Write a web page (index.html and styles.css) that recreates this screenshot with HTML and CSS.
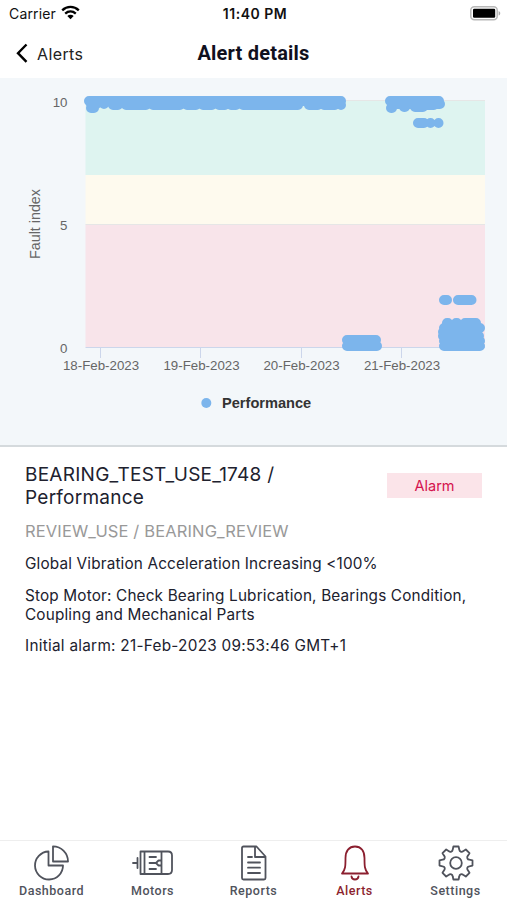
FILE: index.html
```html
<!DOCTYPE html>
<html lang="en">
<head>
<meta charset="utf-8">
<title>Alert details</title>
<link rel="stylesheet" href="styles.css">
</head>
<body>
<div class="screen">
  <div class="status">
    <div class="carrier"><span>Carrier</span>
      <svg width="19" height="15" viewBox="0 0 19 15" fill="none" stroke="#000" stroke-width="2.3"><path d="M1.2 5.4C6 .8 13 .8 17.8 5.4M4.2 8.6C7.3 5.8 11.7 5.8 14.8 8.6"/><path d="M9.5 14.2 6.3 11C8.2 9.3 10.8 9.3 12.7 11Z" fill="#000" stroke="none"/></svg>
    </div>
    <div class="clock">11:40 PM</div>
    <svg class="battery" width="31" height="15" viewBox="0 0 31 15"><rect x=".8" y=".8" width="26.4" height="13" rx="3.5" fill="#fff" stroke="#b8b8b8" stroke-width="1.5"/><rect x="3" y="2.8" width="22.2" height="9" rx="1.2"/><path d="M28.6 5C30.8 5.8 30.8 8.8 28.6 9.6Z" fill="#aaa"/></svg>
  </div>
  <header class="nav">
    <a class="back"><svg width="14" height="22" viewBox="0 0 14 22" fill="none" stroke="#000" stroke-width="2.4"><path d="M12.500 2.500 4 11.200l8.500 8.700"/></svg><span>Alerts</span></a>
    <h1>Alert details</h1>
  </header>
  <section class="chart">
    <svg width="507" height="367" viewBox="0 78 507 367">
      <path fill="#def4f0" d="M85.500 100H485v75H85.500z"/>
      <path fill="#fefaee" d="M85.500 175H485v49.500H85.500z"/>
      <path fill="#f8e4ea" d="M85.500 224.500H485V347H85.500z"/>
      <path stroke="#e6e6e6" d="M85.500 100.500H485M85.500 224.500H485"/>
      <path fill="none" stroke="#ccd6eb" d="M85.500 347.500H485M100.500 347v11M200.500 347v11M301.500 347v11M401.500 347v11"/>
      <g class="series">
        <path d="M89 101H341M91 104.500H96M91 108H94M104 104H104M113 105H118M126 105H146M153 105H180M187 105H196M203 105H212M219 105H225M231 105H236M243 105H298M309 105H318M324 105H335M341 105H341"/>
        <path d="M390 101H439M391 108H392M392 104H440M404 107H405M415 107H423M425 105H434M418 123H424M430.500 123H430.500M438.500 123H438.500M347 340H376M347 346H377M444 300H447M458 300H471.500"/>
        <path d="M447 323H448M456 323H457M465 323H476M444 328H480M443 336H479M443 332H476M444 346H480M444 341H480"/>
      </g>
      <g class="axis">
        <text x="67.500" y="107" text-anchor="end">10</text><text x="67.500" y="229.500" text-anchor="end">5</text><text x="67.500" y="353" text-anchor="end">0</text>
        <text x="101" y="370" text-anchor="middle">18-Feb-2023</text><text x="201.500" y="370" text-anchor="middle">19-Feb-2023</text><text x="301.500" y="370" text-anchor="middle">20-Feb-2023</text><text x="402" y="370" text-anchor="middle">21-Feb-2023</text>
        <text class="ytitle" transform="translate(39.500 224) rotate(-90)" text-anchor="middle">Fault index</text>
      </g>
      <circle cx="206.300" cy="403" r="5" fill="#7cb5ec"/>
      <text class="legend" x="222" y="408">Performance</text>
    </svg>
  </section>
  <main class="details">
    <div class="heading"><h2>BEARING_TEST_USE_1748 /<br>Performance</h2><span class="badge">Alarm</span></div>
    <p class="site">REVIEW_USE / BEARING_REVIEW</p>
    <p class="cause">Global Vibration Acceleration Increasing &lt;100%</p>
    <p class="advice">Stop Motor: Check Bearing Lubrication, Bearings Condition,<br>Coupling and Mechanical Parts</p>
    <p class="initial">Initial alarm: 21-Feb-2023 09:53:46 GMT+1</p>
  </main>
  <nav class="tabs">
    <a><svg width="42" height="36" viewBox="0 0 42 36"><path d="M17.500 6.500A14 14 0 1 0 32 20.500H17.500zM22 1.300V16.500H37A15 15 0 0 0 22 1.300z"/></svg><span>Dashboard</span></a>
    <a><svg width="42" height="36" viewBox="0 0 42 36"><path d="M8.500 6.500H36q4 0 4 4V25q0 4-4 4H8.500zM12.500 6.500v22.500M29.500 6.500v22.500M1 18H5.500M5.500 13V23M17.500 12H24M17.500 18H24M17.500 24H24M29.500 15.500H26.500L24 18l2.500 2.500H29.500"/></svg><span>Motors</span></a>
    <a><svg width="42" height="36" viewBox="0 0 42 36"><path d="M10.500 1.500H23.500L32.500 11.500V33q0 1.500-1.500 1.500H10.500q-1.500 0-1.500-1.500V3q0-1.500 1.500-1.500zM22 1.500V12H32.500M15 12h4M15 17.500H27M15 22.700H27M15 28H27"/></svg><span>Reports</span></a>
    <a class="active"><svg width="42" height="36" viewBox="0 0 42 36"><path d="M8 28.500C11.500 24.500 11.500 21 11.500 13C11.500 6 15 1.500 21 1.500S30.500 6 30.500 13C30.500 21 30.500 24.500 34 28.500ZM17.500 31.500Q18 34.500 21 34.500T24.500 31.500"/></svg><span>Alerts</span></a>
    <a><svg width="42" height="36" viewBox="-21 -18 42 36"><circle r="5.800"/><path d="M-2.600-16.500H2.600L3.300-13.300A2.300 2.300 0 0 0 7.070-11.740L9.830-13.500 13.500-9.830 11.740-7.070A2.300 2.300 0 0 0 13.300-3.300L16.500-2.600V2.600L13.300 3.300A2.300 2.300 0 0 0 11.740 7.070L13.500 9.830 9.830 13.500 7.070 11.740A2.300 2.300 0 0 0 3.300 13.300L2.600 16.500H-2.600L-3.300 13.300A2.300 2.300 0 0 0-7.070 11.740L-9.830 13.500-13.500 9.830-11.740 7.070A2.300 2.300 0 0 0-13.300 3.300L-16.500 2.600V-2.600L-13.300-3.300A2.300 2.300 0 0 0-11.740-7.070L-13.500-9.830-9.830-13.500-7.070-11.740A2.300 2.300 0 0 0-3.300-13.300Z"/></svg><span>Settings</span></a>
  </nav>
</div>
</body>
</html>
```
FILE: styles.css
```css
* { box-sizing: border-box; }
body { margin: 0; background: #fff; color: #20212e; font-family: Inter, sans-serif; }
.screen { width: 507px; height: 900px; display: flex; flex-direction: column; overflow: hidden; }
.status { height: 28px; display: grid; grid-template-columns: 1fr auto 1fr; align-items: center; padding: 0 6px 0 9px; color: #111; }
.carrier { display: flex; align-items: center; gap: 5px; font-size: 14px; letter-spacing: .15px; }
.carrier span { margin-top: -1px; }
.carrier svg { margin-top: -3px; }
.clock { font-size: 14px; font-weight: 600; letter-spacing: .5px; margin-top: -1px; }
.battery { justify-self: end; margin-top: -2px; }
.nav { height: 50px; display: grid; grid-template-columns: 1fr auto 1fr; align-items: center; padding: 0 14px; }
.back { display: flex; align-items: center; gap: 9px; font-size: 16px; letter-spacing: .4px; color: #222; }
.back span { margin-top: 1px; }
h1 { margin: 0; font: 700 20px Roboto, sans-serif; letter-spacing: .2px; color: #10101d; }
.chart { height: 369px; background: #f3f7fa; border-bottom: 2px solid #d5dadd; }
.chart svg { display: block; }
.series { fill: none; stroke: #7cb5ec; stroke-width: 10; stroke-linecap: round; }
.axis { font: 13.300px "Liberation Sans", sans-serif; fill: #666; }
.ytitle { font-size: 14.300px; }
.legend { font: bold 14.600px "Liberation Sans", sans-serif; fill: #333; }
.details { flex: 1; padding: 16px 25px 0; }
.heading { display: flex; justify-content: space-between; }
h2 { margin: 0; font-size: 19px; line-height: 23px; font-weight: 400; letter-spacing: .26px; }
.badge { width: 95px; height: 25px; margin-top: 10px; background: #fbe4e9; color: #d5134e; font-size: 14.500px; line-height: 25px; text-align: center; }
p { margin: 0; font-size: 15.300px; line-height: 19px; letter-spacing: .17px; }
.site { margin-top: 13px; color: #999; font-size: 16.500px; letter-spacing: .14px; }
.cause { margin-top: 13px; }
.advice { margin-top: 13px; }
.initial { margin-top: 12px; letter-spacing: .28px; }
.tabs { height: 60px; border-top: 1px solid #eee; display: grid; grid-template-columns: repeat(5, 1fr); padding: 4px 1px 0; }
.tabs a { display: flex; flex-direction: column; align-items: center; gap: 2px; color: #50535c; font: 500 12.500px/16px Roboto, sans-serif; letter-spacing: .5px; }
.tabs svg { fill: none; stroke: currentColor; stroke-width: 1.800; stroke-linejoin: round; stroke-linecap: round; }
.tabs .active { color: #8b1f2f; }
```
